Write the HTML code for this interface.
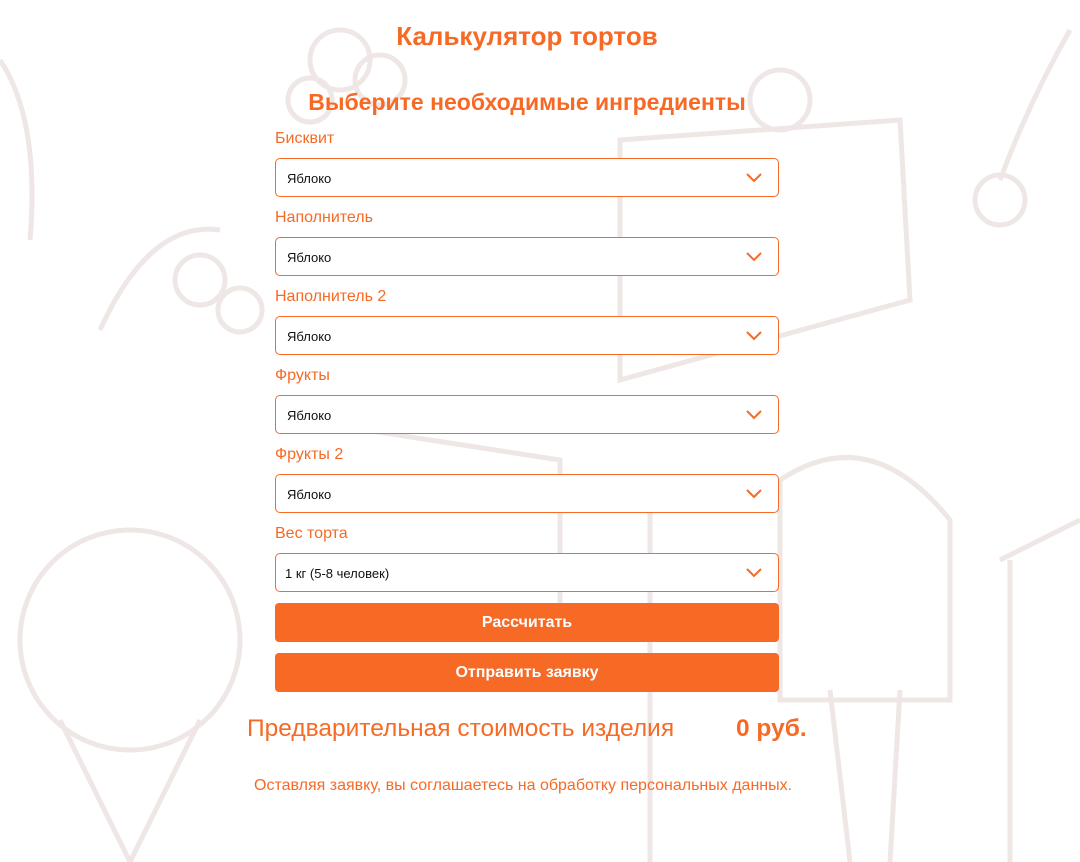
<!DOCTYPE html>
<html><head><meta charset="utf-8"><style>
body{margin:0;width:1080px;height:862px;background:#fff;font-family:"Liberation Sans",sans-serif;color:#f66a26;position:relative;overflow:hidden}
.bg{position:absolute;left:0;top:0}
.a{position:absolute;white-space:nowrap}
.lbl{position:absolute;left:275px;font-size:16px}
.sel{position:absolute;left:275px;width:502px;height:37px;border:1px solid #f66a26;border-radius:5px;background:#fff;font-size:13px;color:#111;box-sizing:content-box}
.sel span{position:absolute;left:11px;top:12px}
.sel svg{position:absolute;right:16px;top:14px}
.btn{position:absolute;left:275px;width:504px;height:39px;background:#f66a26;border-radius:4px;color:#fff;font-weight:bold;font-size:16px;text-align:center;line-height:39px}
</style></head><body>
<svg class="bg" width="1080" height="862" fill="none" stroke="#efe7e5" stroke-width="5">
<circle cx="130" cy="640" r="110"/><path d="M60 720 L130 862 L200 720"/>
<path d="M0 60 Q40 120 30 240"/><circle cx="340" cy="60" r="30"/><circle cx="380" cy="80" r="25"/><circle cx="310" cy="100" r="22"/>
<path d="M620 140 L900 120 L910 300 L620 380 Z"/><circle cx="780" cy="100" r="30"/>
<path d="M1000 560 L1080 520 M1010 560 L1010 862"/><circle cx="1000" cy="200" r="25"/><path d="M1000 180 Q1030 100 1070 30"/>
<path d="M780 480 Q870 420 950 520 L950 700 L780 700 Z"/><path d="M830 690 L850 862 M900 690 L890 862"/>
<circle cx="200" cy="280" r="25"/><circle cx="240" cy="310" r="22"/><path d="M100 330 Q150 220 220 230"/>
<path d="M300 420 L560 460 L560 640 M0 500"/><path d="M650 500 L650 862"/>
</svg>
<div class="a" style="left:0;width:1054px;text-align:center;top:21px;font-size:26px;font-weight:bold">Калькулятор тортов</div>
<div class="a" style="left:0;width:1054px;text-align:center;top:89px;font-size:23px;font-weight:bold">Выберите необходимые ингредиенты</div>

<div class="lbl" style="top:130px">Бисквит</div>
<div class="sel" style="top:158px"><span>Яблоко</span><svg width="16" height="10"><path d="M1 1 L8 8 L15 1" stroke="#f66a26" stroke-width="2" fill="none"/></svg></div>
<div class="lbl" style="top:209px">Наполнитель</div>
<div class="sel" style="top:237px"><span>Яблоко</span><svg width="16" height="10"><path d="M1 1 L8 8 L15 1" stroke="#f66a26" stroke-width="2" fill="none"/></svg></div>
<div class="lbl" style="top:288px">Наполнитель 2</div>
<div class="sel" style="top:316px"><span>Яблоко</span><svg width="16" height="10"><path d="M1 1 L8 8 L15 1" stroke="#f66a26" stroke-width="2" fill="none"/></svg></div>
<div class="lbl" style="top:367px">Фрукты</div>
<div class="sel" style="top:395px"><span>Яблоко</span><svg width="16" height="10"><path d="M1 1 L8 8 L15 1" stroke="#f66a26" stroke-width="2" fill="none"/></svg></div>
<div class="lbl" style="top:446px">Фрукты 2</div>
<div class="sel" style="top:474px"><span>Яблоко</span><svg width="16" height="10"><path d="M1 1 L8 8 L15 1" stroke="#f66a26" stroke-width="2" fill="none"/></svg></div>
<div class="lbl" style="top:525px">Вес торта</div>
<div class="sel" style="top:553px"><span style="left:9px">1 кг (5-8 человек)</span><svg width="16" height="10"><path d="M1 1 L8 8 L15 1" stroke="#f66a26" stroke-width="2" fill="none"/></svg></div>

<div class="btn" style="top:603px">Рассчитать</div>
<div class="btn" style="top:653px">Отправить заявку</div>

<div class="a" style="left:247px;top:715px;font-size:24.5px">Предварительная стоимость изделия</div>
<div class="a" style="left:736px;top:715px;font-size:24.5px;font-weight:bold">0 руб.</div>
<div class="a" style="left:254px;top:777px;font-size:16px">Оставляя заявку, вы соглашаетесь на обработку персональных данных.</div>
</body></html>
